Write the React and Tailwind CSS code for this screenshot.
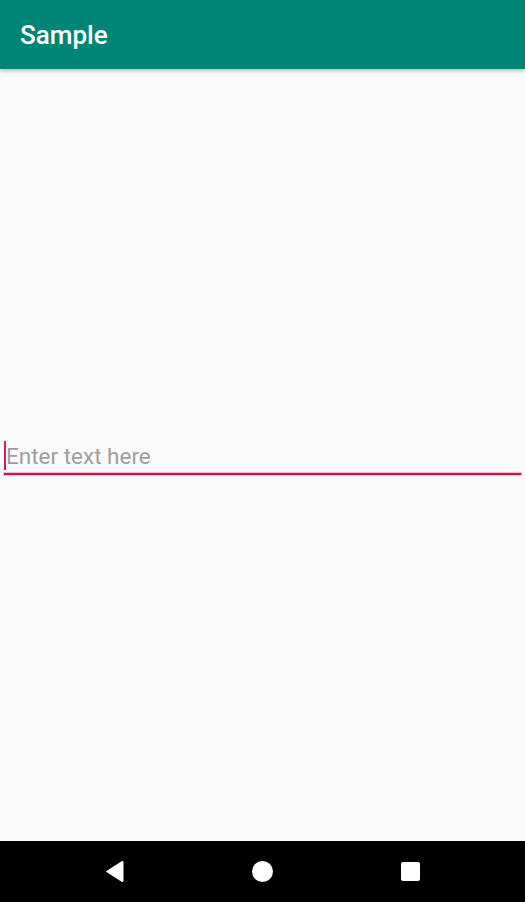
export default function App() {
  return (
    <div className="flex h-[902px] w-[525px] flex-col bg-[#fafafa]" style={{ fontFamily: 'Roboto, "Noto Sans", sans-serif' }}>
      <header className="relative z-10 flex h-[69px] shrink-0 items-center bg-[#008577] px-[20px] shadow-[0_2px_4px_rgba(0,0,0,0.25)]">
        <h1 className="text-[26px] font-medium leading-none text-white">Sample</h1>
      </header>
      <main className="flex flex-1 flex-col justify-center pt-[5px]">
        <div className="px-[4px]">
          <div className="flex h-[29px] items-center">
            <span className="h-[29px] w-[2px] bg-[#D81B60]" />
            <span className="pt-[3px] text-[22.5px] leading-[29px] text-[#9e9e9e]">Enter text here</span>
          </div>
          <div className="mt-[3px] h-[2px] bg-[#C2185B] shadow-[0_0_1px_1px_rgba(236,64,122,0.35)]" />
        </div>
      </main>
      <nav className="flex h-[61px] shrink-0 items-center justify-center bg-black">
        <div className="flex w-[148px] justify-center">
          <svg width="19" height="23" viewBox="0 0 19 23">
            <path d="M1.5 11.5 L17 1.5 Q18 1 18 2.2 L18 20.8 Q18 22 17 21.5 Z" fill="white" stroke="white" strokeWidth="1" strokeLinejoin="round" />
          </svg>
        </div>
        <div className="flex w-[148px] justify-center">
          <div className="h-[21px] w-[21px] rounded-full bg-white" />
        </div>
        <div className="flex w-[148px] justify-center">
          <div className="h-[19px] w-[19px] rounded-[2px] bg-white" />
        </div>
      </nav>
    </div>
  );
}
